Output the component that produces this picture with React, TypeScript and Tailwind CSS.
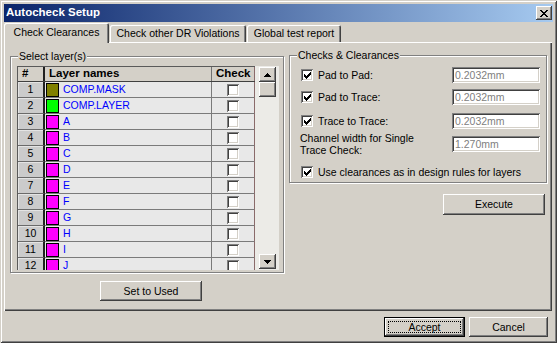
import React from "react";

const RAISED =
  "bg-[#d4d0c8] shadow-[inset_-1px_-1px_#404040,inset_1px_1px_#ffffff,inset_-2px_-2px_#808080,inset_2px_2px_#d4d0c8]";
const SUNKEN =
  "shadow-[inset_1px_1px_#808080,inset_-1px_-1px_#ffffff,inset_2px_2px_#404040,inset_-2px_-2px_#d4d0c8]";

function Check() {
  return (
    <svg width="7" height="7" viewBox="0 0 7 7" shapeRendering="crispEdges">
      <rect x="0" y="2" width="1" height="3" fill="#000" />
      <rect x="1" y="3" width="1" height="3" fill="#000" />
      <rect x="2" y="4" width="1" height="3" fill="#000" />
      <rect x="3" y="3" width="1" height="3" fill="#000" />
      <rect x="4" y="2" width="1" height="3" fill="#000" />
      <rect x="5" y="1" width="1" height="3" fill="#000" />
      <rect x="6" y="0" width="1" height="3" fill="#000" />
    </svg>
  );
}

function Box({ checked }: { checked?: boolean }) {
  return (
    <span
      className={`w-[12px] h-[12px] bg-white flex items-center justify-center shrink-0 ${SUNKEN}`}
    >
      {checked && <Check />}
    </span>
  );
}

function Arrow({ up }: { up?: boolean }) {
  return (
    <svg width="7" height="4" viewBox="0 0 7 4" shapeRendering="crispEdges">
      {up ? (
        <>
          <rect x="3" y="0" width="1" height="1" fill="#000" />
          <rect x="2" y="1" width="3" height="1" fill="#000" />
          <rect x="1" y="2" width="5" height="1" fill="#000" />
          <rect x="0" y="3" width="7" height="1" fill="#000" />
        </>
      ) : (
        <>
          <rect x="0" y="0" width="7" height="1" fill="#000" />
          <rect x="1" y="1" width="5" height="1" fill="#000" />
          <rect x="2" y="2" width="3" height="1" fill="#000" />
          <rect x="3" y="3" width="1" height="1" fill="#000" />
        </>
      )}
    </svg>
  );
}

function CloseX() {
  const px: [number, number, number][] = [
    [0, 0, 2], [6, 0, 2],
    [1, 1, 2], [5, 1, 2],
    [2, 2, 4],
    [3, 3, 2],
    [2, 4, 4],
    [1, 5, 2], [5, 5, 2],
    [0, 6, 2], [6, 6, 2],
  ];
  return (
    <svg width="8" height="7" viewBox="0 0 8 7" shapeRendering="crispEdges">
      {px.map(([x, y, w], i) => (
        <rect key={i} x={x} y={y} width={w} height="1" fill="#000" />
      ))}
    </svg>
  );
}

const rows: [string, string, string][] = [
  ["1", "COMP.MASK", "#808000"],
  ["2", "COMP.LAYER", "#00ff00"],
  ["3", "A", "#ff00ff"],
  ["4", "B", "#ff00ff"],
  ["5", "C", "#ff00ff"],
  ["6", "D", "#ff00ff"],
  ["7", "E", "#ff00ff"],
  ["8", "F", "#ff00ff"],
  ["9", "G", "#ff00ff"],
  ["10", "H", "#ff00ff"],
  ["11", "I", "#ff00ff"],
  ["12", "J", "#ff00ff"],
];

function Field({ value }: { value: string }) {
  return (
    <div
      className={`ml-auto w-[88px] h-[16px] bg-white pl-[3px] flex items-center text-[#808080] ${SUNKEN}`}
    >
      {value}
    </div>
  );
}

export default function App() {
  return (
    <div className="w-[558px] h-[346px] bg-white font-['Liberation_Sans',Arial,sans-serif] text-[10.5px] text-black leading-none">
      <div className="w-[557px] h-[343px] bg-[#d4d0c8] p-[4px] flex flex-col shadow-[inset_1px_1px_#d4d0c8,inset_-1px_-1px_#404040,inset_2px_2px_#ffffff,inset_-2px_-2px_#808080]">
        {/* Title bar */}
        <div className="h-[18px] flex items-center justify-between pl-[2px] pr-[1px] bg-[linear-gradient(to_right,#0a246a,#a6caf0)]">
          <span className="text-white font-bold text-[11.5px]">Autocheck Setup</span>
          <span className={`w-[16px] h-[14px] flex items-center justify-center ${RAISED}`}>
            <CloseX />
          </span>
        </div>

        {/* Tabs */}
        <div className="h-[20px] flex items-end relative z-10">
          <div className="w-[105px] h-[20px] -mb-[1px] bg-[#d4d0c8] rounded-t-[2px] flex items-center justify-center pb-[2px] shadow-[inset_1px_1px_#ffffff,inset_-1px_0_#404040,inset_-2px_0_#808080]">
            Check Clearances
          </div>
          <div className="ml-[1px] w-[136px] h-[17px] bg-[#d4d0c8] rounded-t-[2px] flex items-center justify-center shadow-[inset_1px_1px_#ffffff,inset_-1px_0_#404040,inset_-2px_0_#808080]">
            Check other DR Violations
          </div>
          <div className="ml-[1px] w-[94px] h-[17px] bg-[#d4d0c8] rounded-t-[2px] flex items-center justify-center shadow-[inset_1px_1px_#ffffff,inset_-1px_0_#404040,inset_-2px_0_#808080]">
            Global test report
          </div>
        </div>

        {/* Panel */}
        <div className="w-[548px] h-[269px] flex gap-[5px] pl-[6px] pt-[14px] shadow-[inset_1px_1px_#ffffff,inset_-1px_-1px_#404040,inset_-2px_-2px_#808080]">
          {/* Left column */}
          <div className="w-[274px] flex flex-col items-center">
            <div className="relative w-full h-[217px] border border-[#808080] shadow-[inset_1px_1px_#ffffff,1px_1px_#ffffff] pt-[9px] pl-[6px]">
              <span className="absolute -top-[6px] left-[7px] px-[1px] bg-[#d4d0c8]">
                Select layer(s)
              </span>
              <div className="w-[262px] h-[204px] flex">
                <div className="w-[238px] flex flex-col overflow-hidden border-l border-t border-[#5a5a5a]">
                  <div className="h-[15px] flex shrink-0 font-bold text-[11.5px] border-b border-[#404040]">
                    <div className="w-[27px] bg-[#d4d0c8] border-r-2 border-[#202020] pl-[4px] flex items-center">
                      #
                    </div>
                    <div className="w-[167px] bg-[#d4d0c8] border-r border-[#707070] pl-[4px] flex items-center">
                      Layer names
                    </div>
                    <div className="w-[43px] bg-[#d4d0c8] border-r border-[#8a6a6a] pl-[4px] flex items-center">
                      Check
                    </div>
                  </div>
                  {rows.map(([n, name, color]) => (
                    <div key={n} className="h-[16px] flex shrink-0">
                      <div className="w-[27px] bg-[#cbcbcb] border-r-2 border-b border-r-[#202020] border-b-[#6a6a6a] shadow-[inset_1px_1px_#e4e4e4] flex items-center justify-center">
                        {n}
                      </div>
                      <div className="w-[167px] bg-[#e8e8e8] border-r border-b border-[#7a7a7a] flex items-center pl-[1px]">
                        <span
                          className="w-[13px] h-[14px] border border-black shrink-0"
                          style={{ backgroundColor: color }}
                        />
                        <span className="ml-[4px] text-[#0000ff]">{name}</span>
                      </div>
                      <div className="w-[43px] bg-[#e8e8e8] border-r border-b border-r-[#8a6a6a] border-b-[#7a7a7a] flex items-center justify-center">
                        <Box />
                      </div>
                    </div>
                  ))}
                </div>
                <div className="w-[24px] bg-[#ecebe7] flex flex-col items-center">
                  <div className={`w-[17px] h-[15px] mt-[1px] flex items-center justify-center ${RAISED}`}>
                    <Arrow up />
                  </div>
                  <div className={`w-[17px] h-[15px] ${RAISED}`} />
                  <div className="flex-1" />
                  <div className={`w-[17px] h-[15px] mb-[1px] flex items-center justify-center ${RAISED}`}>
                    <Arrow />
                  </div>
                </div>
              </div>
            </div>
            <div className={`mt-[8px] ml-[8px] w-[102px] h-[20px] flex items-center justify-center ${RAISED}`}>
              Set to Used
            </div>
          </div>

          {/* Right column */}
          <div className="w-[258px] flex flex-col items-end">
            <div className="relative w-full h-[128px] -mt-[1px] border border-[#808080] shadow-[inset_1px_1px_#ffffff,1px_1px_#ffffff] pt-[11px] pl-[11px] pr-[6px] flex flex-col">
              <span className="absolute -top-[6px] left-[7px] px-[1px] bg-[#d4d0c8]">
                Checks &amp; Clearances
              </span>
              <div className="h-[16px] flex items-center">
                <Box checked />
                <span className="ml-[5px]">Pad to Pad:</span>
                <Field value="0.2032mm" />
              </div>
              <div className="h-[16px] mt-[6px] flex items-center">
                <Box checked />
                <span className="ml-[5px]">Pad to Trace:</span>
                <Field value="0.2032mm" />
              </div>
              <div className="h-[16px] mt-[8px] flex items-center">
                <Box checked />
                <span className="ml-[5px]">Trace to Trace:</span>
                <Field value="0.2032mm" />
              </div>
              <div className="h-[24px] mt-[3px] flex items-center">
                <span className="-ml-[1px] leading-[12px]">
                  Channel width for Single
                  <br />
                  Trace Check:
                </span>
                <Field value="1.270mm" />
              </div>
              <div className="h-[16px] mt-[8px] flex items-center">
                <Box checked />
                <span className="ml-[5px]">Use clearances as in design rules for layers</span>
              </div>
            </div>
            <div className={`mt-[11px] mr-[2px] w-[102px] h-[21px] flex items-center justify-center ${RAISED}`}>
              Execute
            </div>
          </div>
        </div>

        {/* Bottom buttons */}
        <div className="mt-[6px] flex justify-end gap-[4px] pr-[5px]">
          <div className="w-[81px] h-[20px] border border-black bg-[#d4d0c8] p-0 flex">
            <div className={`flex-1 flex items-center justify-center p-[3px] ${RAISED}`}>
              <div className="w-full h-full border border-dotted border-black flex items-center justify-center">
                Accept
              </div>
            </div>
          </div>
          <div className={`w-[79px] h-[20px] flex items-center justify-center ${RAISED}`}>
            Cancel
          </div>
        </div>
      </div>
    </div>
  );
}
